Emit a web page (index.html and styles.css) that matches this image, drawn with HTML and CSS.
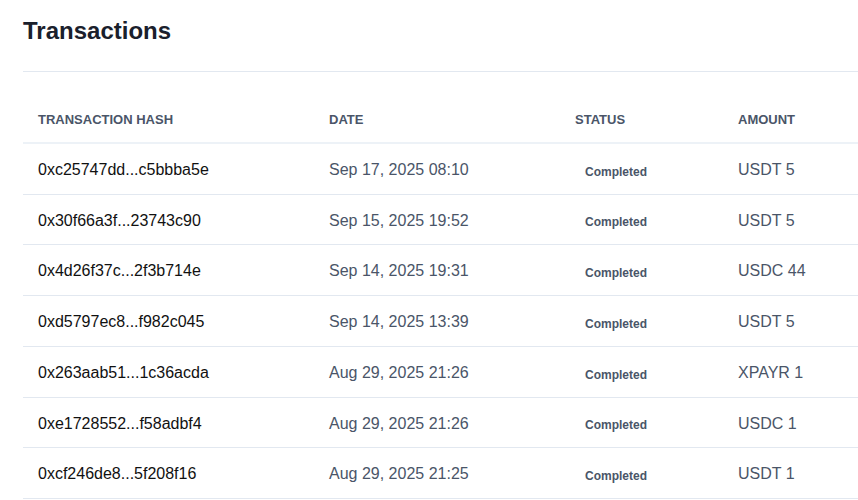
FILE: index.html
```html
<!DOCTYPE html>
<html>
<head>
    <title>Transactions</title>
    <link rel="stylesheet" href="styles.css">
</head>
<body>
    <div class="page">
        <h1 class="page-title">Transactions</h1>
        <table class="tx-table">
            <thead>
                <tr>
                    <th class="col-hash">Transaction Hash</th>
                    <th class="col-date">Date</th>
                    <th class="col-status">Status</th>
                    <th class="col-amount">Amount</th>
                </tr>
            </thead>
            <tbody>
                <tr>
                    <td class="hash">0xc25747dd...c5bbba5e</td>
                    <td>Sep 17, 2025 08:10</td>
                    <td><span class="badge">Completed</span></td>
                    <td>USDT 5</td>
                </tr>
                <tr>
                    <td class="hash">0x30f66a3f...23743c90</td>
                    <td>Sep 15, 2025 19:52</td>
                    <td><span class="badge">Completed</span></td>
                    <td>USDT 5</td>
                </tr>
                <tr>
                    <td class="hash">0x4d26f37c...2f3b714e</td>
                    <td>Sep 14, 2025 19:31</td>
                    <td><span class="badge">Completed</span></td>
                    <td>USDC 44</td>
                </tr>
                <tr>
                    <td class="hash">0xd5797ec8...f982c045</td>
                    <td>Sep 14, 2025 13:39</td>
                    <td><span class="badge">Completed</span></td>
                    <td>USDT 5</td>
                </tr>
                <tr>
                    <td class="hash">0x263aab51...1c36acda</td>
                    <td>Aug 29, 2025 21:26</td>
                    <td><span class="badge">Completed</span></td>
                    <td>XPAYR 1</td>
                </tr>
                <tr>
                    <td class="hash">0xe1728552...f58adbf4</td>
                    <td>Aug 29, 2025 21:26</td>
                    <td><span class="badge">Completed</span></td>
                    <td>USDC 1</td>
                </tr>
                <tr>
                    <td class="hash">0xcf246de8...5f208f16</td>
                    <td>Aug 29, 2025 21:25</td>
                    <td><span class="badge">Completed</span></td>
                    <td>USDT 1</td>
                </tr>
            </tbody>
        </table>
    </div>
</body>
</html>
```

FILE: styles.css
```css
body {
    margin: 0;
    font-family: "Liberation Sans", Arial, sans-serif;
    background-color: #fff;
    color: #1a202c;
    overflow: hidden;
}

.page {
    padding: 17px 0 0 23px;
}

.page-title {
    margin: 0;
    font-size: 24px;
    line-height: 28px;
    font-weight: bold;
    color: #1a202c;
    padding-bottom: 26px;
    border-bottom: 1px solid #e2e8f0;
}

.tx-table {
    margin-top: 24px;
    width: 835px;
    border-collapse: collapse;
    table-layout: fixed;
}

.tx-table th {
    text-align: left;
    font-size: 13px;
    font-weight: bold;
    text-transform: uppercase;
    color: #4a5568;
    padding: 15px 15px 13px;
    line-height: 18px;
    border-bottom: 2px solid #edf2f7;
}

.col-hash {
    width: 261px;
}

.col-date {
    width: 216px;
}

.col-status {
    width: 133px;
}

.tx-table td {
    height: 19.7px;
    font-size: 16px;
    line-height: 19.7px;
    color: #4a5568;
    padding: 16px 15px 14px;
    border-bottom: 1px solid #e2e8f0;
    vertical-align: middle;
    white-space: nowrap;
}

.tx-table td.hash {
    color: #111;
}

.badge {
    display: inline-block;
    vertical-align: middle;
    padding: 2px 10px 0;
    font-size: 12px;
    line-height: 14px;
    font-weight: bold;
    color: #4a5568;
}
```
